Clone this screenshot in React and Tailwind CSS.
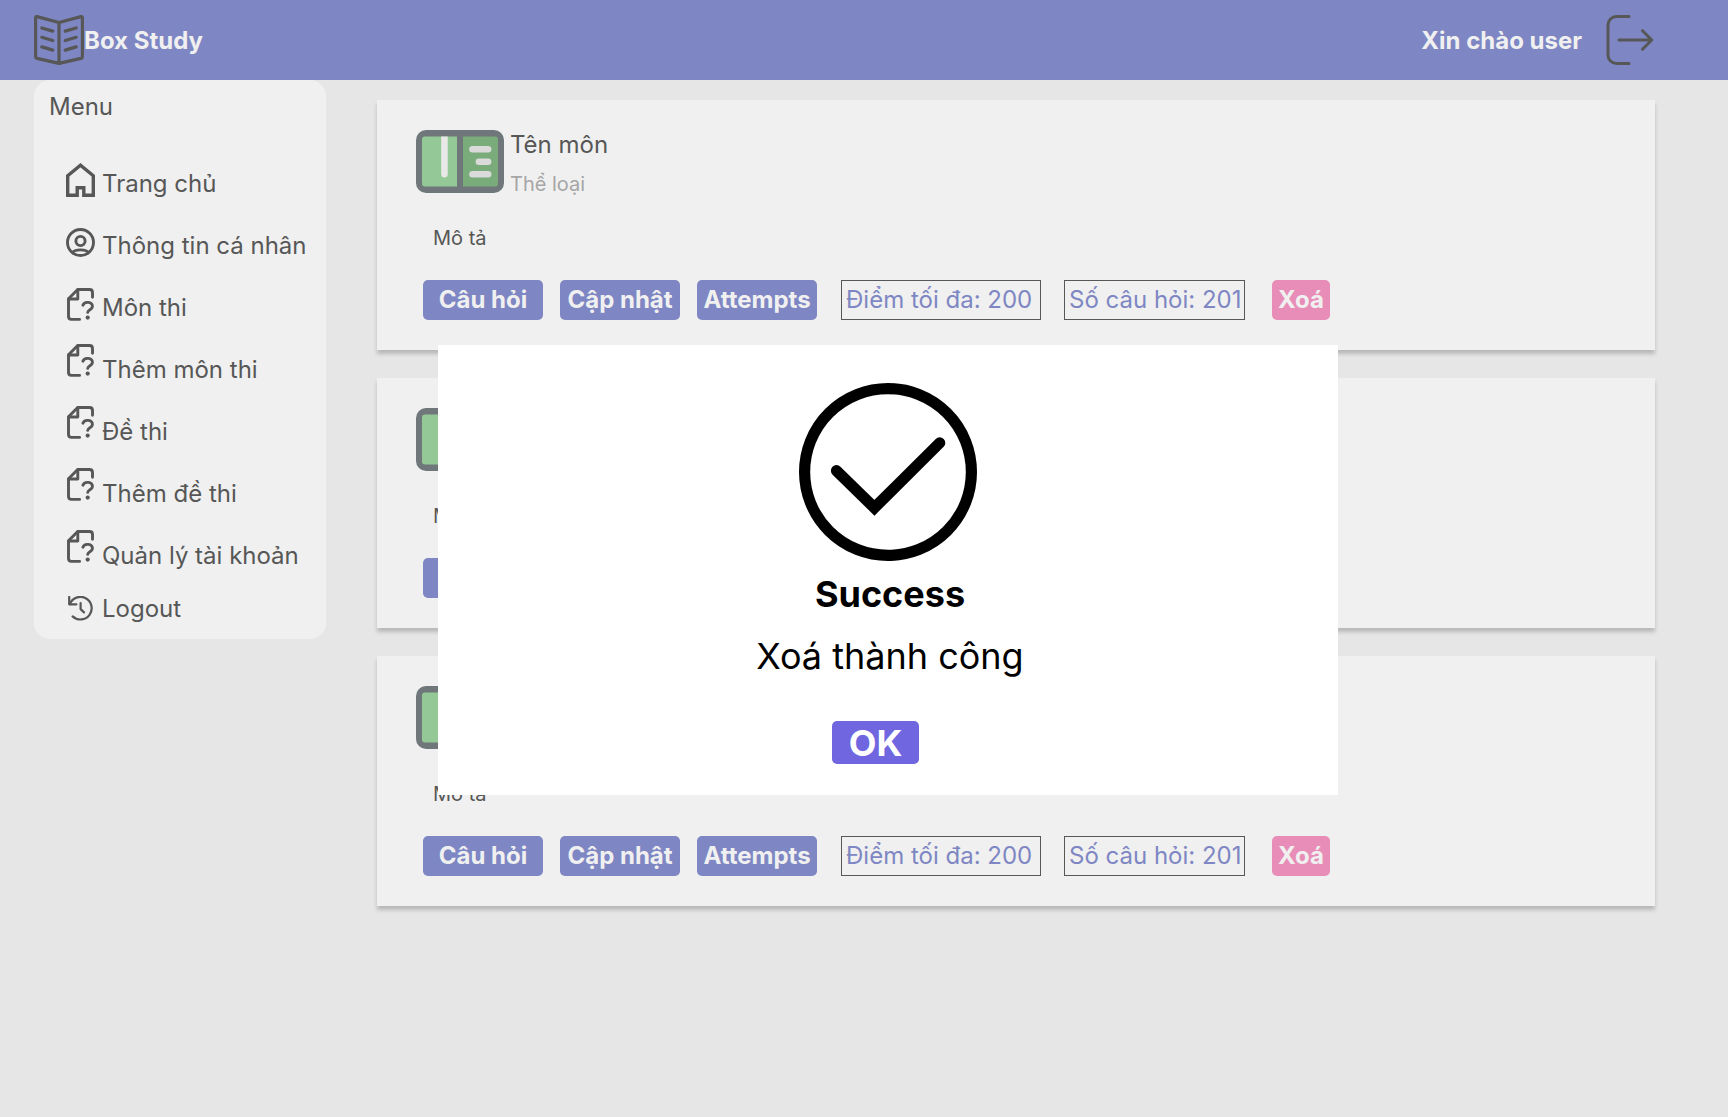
function BookLogo() {
  return (
    <svg className="size-[50px] shrink-0" viewBox="0 0 50 50" fill="none" stroke="#565756" strokeWidth="3.2" strokeLinecap="round" strokeLinejoin="round" aria-hidden="true">
      <path d="M25 7.5 3 1.6Q1.6 1.4 1.6 3V41.5Q1.6 43 3 43.4L25 48.4 47 43.4Q48.4 43 48.4 41.5V3Q48.4 1.4 47 1.6ZM25 7.5V48.4" />
      <path d="M7.8 13 18.8 16.1M7.8 22.3 18.8 25.5M7.8 31.9 18.8 35.1M42.2 13 31.2 16.1M42.2 22.3 31.2 25.5M42.2 31.9 31.2 35.1" />
    </svg>
  );
}

function ExitIcon() {
  return (
    <svg className="size-[50px]" viewBox="0 0 50 50" fill="none" stroke="#565756" strokeWidth="3" strokeLinecap="round" strokeLinejoin="round" aria-hidden="true">
      <path d="M24 1.5H11.5A8.5 8.5 0 0 0 3 10V40A8.5 8.5 0 0 0 11.5 48.5H24" />
      <path d="M14 25H46.5M37.5 15.7 46.8 25 37.5 34.3" />
    </svg>
  );
}

function HomeIcon() {
  return (
    <svg className="w-[29px] h-[34px] self-center" viewBox="0 0 29 34" fill="none" stroke="#565756" strokeWidth="3.4" aria-hidden="true">
      <path d="M1.7 32.2V12.8L14.5 2.2 27.3 12.8V32.2H17.8V24.7H11.2V32.2Z" />
    </svg>
  );
}

function UserIcon() {
  return (
    <svg className="size-[29px] self-center" viewBox="0 0 29 29" fill="none" stroke="#565756" strokeWidth="2.9" aria-hidden="true">
      <circle cx="14.5" cy="14.5" r="13" />
      <circle cx="14.5" cy="13" r="4.6" />
      <path d="M6.4 24.6C8.5 20.9 20.5 20.9 22.6 24.6" />
    </svg>
  );
}

function DocIcon({ className }) {
  return (
    <svg className={className} viewBox="0 0 27 33" fill="none" stroke="#565756" strokeWidth="2.9" strokeLinecap="round" strokeLinejoin="round" aria-hidden="true">
      <path d="M12.6 31.4H4.4Q1.5 31.4 1.5 28.5V10.8L10.7 1.5H22.6Q25.5 1.5 25.5 4.5V9.2" />
      <path d="M1.8 11H10.8V1.8" />
      <path d="M15.9 17.2C17.4 12.9 25.6 13.6 25.4 18.6 25.3 21.7 20.7 21.6 20.7 24.4" />
      <circle cx="20.7" cy="29.6" r="2.1" fill="#565756" stroke="none" />
    </svg>
  );
}

function HistoryIcon() {
  return (
    <svg className="size-[25px] self-end mb-1.5" viewBox="0 0 25 25" fill="none" stroke="#565756" strokeWidth="2.2" strokeLinecap="round" strokeLinejoin="round" aria-hidden="true">
      <path d="M1.2 1V8.3H8.4" />
      <path d="M1.8 8.2A11.3 11.3 0 1 1 4.6 20.4" />
      <path d="M12.6 7.2V13.1L16 16.4" />
    </svg>
  );
}

function SubjectIcon() {
  return (
    <svg className="w-[88px] h-[63px]" viewBox="0 0 88 63" aria-hidden="true">
      <rect width="88" height="63" rx="10" fill="#6f777a" />
      <path d="M9 6.4H41V56.6H9Q6 56.6 6 53.6V9.4Q6 6.4 9 6.4Z" fill="#94c897" />
      <path d="M47 6.4H79Q82 6.4 82 9.4V53.6Q82 56.6 79 56.6H47Z" fill="#79ab7b" />
      <path d="M25.2 6.4H31.7V44.2A3.2 3.2 0 0 1 25.2 44.2Z" fill="#e8e8e8" />
      <rect x="53.2" y="16" width="22.2" height="6.4" rx="3.2" fill="#dadada" />
      <rect x="59.6" y="28.6" width="15.8" height="6.4" rx="3.2" fill="#dadada" />
      <rect x="53.2" y="41" width="22.2" height="6.4" rx="3.2" fill="#dadada" />
    </svg>
  );
}

function SuccessIcon() {
  return (
    <svg className="size-[178px]" viewBox="0 0 178 178" fill="none" stroke="#000" strokeWidth="11.2" aria-hidden="true">
      <circle cx="89" cy="89" r="83.4" />
      <path d="M37.5 87.7 75.4 124.8 140.7 59.9" strokeLinecap="round" />
    </svg>
  );
}

const centeredDoc = "w-[27px] h-[33px] self-center";
const raisedDoc = "w-[27px] h-[33px] self-start";

const menu = [
  { label: "Trang chủ", icon: <HomeIcon /> },
  { label: "Thông tin cá nhân", icon: <UserIcon /> },
  { label: "Môn thi", icon: <DocIcon className={centeredDoc} /> },
  { label: "Thêm môn thi", icon: <DocIcon className={raisedDoc} /> },
  { label: "Đề thi", icon: <DocIcon className={raisedDoc} /> },
  { label: "Thêm đề thi", icon: <DocIcon className={raisedDoc} /> },
  { label: "Quản lý tài khoản", icon: <DocIcon className={raisedDoc} /> },
  { label: "Logout", icon: <HistoryIcon />, height: "h-[35px]" },
];

function Sidebar() {
  return (
    <nav aria-labelledby="menu-title" className="w-[292px] shrink-0 rounded-2xl bg-[#f0f0f0] pt-3 pb-3">
      <h2 id="menu-title" className="pl-[15px]">Menu</h2>
      <ul className="mt-[37px] flex flex-col gap-[18px] pl-8">
        {menu.map(({ label, icon, height = "h-11" }) => (
          <li key={label}>
            <a href="#" className={`flex ${height}`}>
              <span className="flex w-9 justify-start">
                <span className="flex w-[29px] justify-center">{icon}</span>
              </span>
              <span className="mb-1 self-end whitespace-nowrap">{label}</span>
            </a>
          </li>
        ))}
      </ul>
    </nav>
  );
}

function ActionButton({ children }) {
  return (
    <button type="button" className="h-10 w-[120px] rounded-[5px] bg-[#7e87c3] pb-0.5 font-bold text-[#f0f0f0]">
      {children}
    </button>
  );
}

function SubjectCard() {
  return (
    <article className="bg-[#f0f0f0] px-[39px] pt-[30px] pb-[30px] shadow-[0_4px_4px_rgba(0,0,0,0.2)]">
      <div className="flex gap-[6px]">
        <SubjectIcon />
        <div className="flex flex-col gap-[13px]">
          <h3>Tên môn</h3>
          <p className="text-[20px] leading-6 text-[#a6a6a6]">Thể loại</p>
        </div>
      </div>
      <p className="mt-[30px] pl-[17px] text-[20px] leading-6">Mô tả</p>
      <div className="mt-[30px] flex items-center pl-[7px] whitespace-nowrap">
        <div className="flex gap-[17px]">
          <ActionButton>Câu hỏi</ActionButton>
          <ActionButton>Cập nhật</ActionButton>
          <ActionButton>Attempts</ActionButton>
        </div>
        <p className="ml-6 h-10 w-[200px] border border-[#565756] pt-1 pl-1 text-[#7e87c3]">Điểm tối đa: 200</p>
        <p className="ml-[23px] h-10 w-[181px] border border-[#565756] pt-1 pl-1 text-[#7e87c3]">Số câu hỏi: 201</p>
        <button type="button" className="ml-[27px] h-10 w-[58px] rounded-[5px] bg-[#e88db7] pb-0.5 font-bold text-[#f0f0f0]">Xoá</button>
      </div>
    </article>
  );
}

function SuccessDialog() {
  return (
    <div className="fixed inset-0 flex items-center justify-center pt-[23px] pl-12">
      <div role="dialog" aria-modal="true" aria-labelledby="dialog-title" className="flex h-[450px] w-[900px] flex-col items-center bg-white pt-[38px] text-[36px] leading-[44px] text-black">
        <SuccessIcon />
        <div className="mt-[11px] flex flex-col items-center gap-[18px] pl-1">
          <h2 id="dialog-title" className="font-bold">Success</h2>
          <p>Xoá thành công</p>
        </div>
        <button type="button" className="mt-[43px] mr-[25px] flex h-[43px] w-[87px] items-center justify-center rounded-[5px] bg-[#6f66e0] font-bold text-white">OK</button>
      </div>
    </div>
  );
}

export default function App() {
  return (
    <div className="min-h-screen bg-[#e6e6e6] font-['Inter',sans-serif] text-[24px] leading-[29px] text-[#565756]">
      <header className="flex h-20 items-center justify-between bg-[#7e87c3] pr-[73px] pl-[34px] font-bold text-[#f0f0f0]">
        <a href="#" className="flex items-center">
          <BookLogo />
          <span>Box Study</span>
        </a>
        <div className="flex items-center gap-[23px]">
          <span>Xin chào user</span>
          <button type="button" aria-label="Logout">
            <ExitIcon />
          </button>
        </div>
      </header>
      <div className="flex items-start gap-[51px] pr-[73px] pb-10 pl-[34px]">
        <Sidebar />
        <main className="flex min-w-0 flex-1 flex-col gap-7 pt-5">
          <SubjectCard />
          <SubjectCard />
          <SubjectCard />
        </main>
      </div>
      <SuccessDialog />
    </div>
  );
}
